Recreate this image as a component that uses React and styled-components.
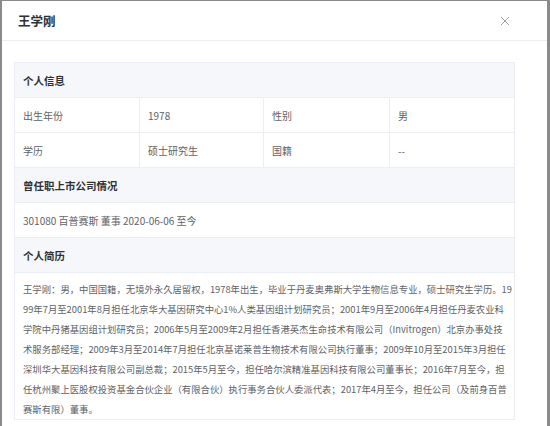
import React from "react";
import styled, { createGlobalStyle } from "styled-components";

const Global = createGlobalStyle`
  html, body { margin: 0; padding: 0; }
  body {
    background: #8a8a8a;
    overflow: hidden;
    font-family: "Noto Sans CJK SC", "Noto Sans", sans-serif;
  }
`;

const Modal = styled.div`
  margin: 1px 0 0 2px;
  width: 545px;
  height: 440px;
  background: #fff;
  box-sizing: border-box;
`;

const Header = styled.div`
  height: 39px;
  border-bottom: 1px solid #eeeeee;
  display: flex;
  align-items: center;
  justify-content: space-between;
  padding: 0 37px 0 16px;
`;

const Title = styled.div`
  font-size: 12.5px;
  font-weight: 700;
  color: #303133;
`;

const Close = styled.button`
  border: 0;
  background: none;
  padding: 0;
  width: 10px;
  height: 10px;
  display: flex;
  cursor: pointer;
`;

const Body = styled.div`
  padding: 21px 32px 0 12px;
`;

const Card = styled.div`
  border: 1px solid #ebeef5;
`;

const SectionTitle = styled.div`
  height: 35px;
  box-sizing: border-box;
  display: flex;
  align-items: center;
  padding-left: 8px;
  background: #f5f7fa;
  font-size: 10.5px;
  font-weight: 700;
  color: #303133;
  border-bottom: 1px solid #ebeef5;
`;

const Grid = styled.div`
  display: grid;
  grid-template-columns: 125px 124px 126px 1fr;
`;

const Cell = styled.div`
  height: 35px;
  box-sizing: border-box;
  display: flex;
  align-items: center;
  padding-left: 8px;
  font-size: 10px;
  color: #606266;
  border-bottom: 1px solid #ebeef5;
  border-right: ${(p) => (p.$last ? "0" : "1px solid #ebeef5")};
`;

const Line = styled.div`
  height: 35px;
  box-sizing: border-box;
  display: flex;
  align-items: center;
  padding-left: 8px;
  font-size: 10px;
  color: #606266;
  border-bottom: 1px solid #ebeef5;
`;

const Para = styled.p`
  margin: 0;
  padding: 6px 0 0 8px;
  font-size: 9.35px;
  line-height: 20px;
  color: #606266;
  white-space: nowrap;
`;

const rows = [
  ["出生年份", "1978", "性别", "男"],
  ["学历", "硕士研究生", "国籍", "--"],
];

const bioLines = [
  "王学刚：男，中国国籍，无境外永久居留权，1978年出生，毕业于丹麦奥弗斯大学生物信息专业，硕士研究生学历。19",
  "99年7月至2001年8月担任北京华大基因研究中心1%人类基因组计划研究员；2001年9月至2006年4月担任丹麦农业科",
  "学院中丹猪基因组计划研究员；2006年5月至2009年2月担任香港英杰生命技术有限公司（Invitrogen）北京办事处技",
  "术服务部经理；2009年3月至2014年7月担任北京基诺莱普生物技术有限公司执行董事；2009年10月至2015年3月担任",
  "深圳华大基因科技有限公司副总裁；2015年5月至今，担任哈尔滨精准基因科技有限公司董事长；2016年7月至今，担",
  "任杭州聚上医股权投资基金合伙企业（有限合伙）执行事务合伙人委派代表；2017年4月至今，担任公司（及前身百普",
  "赛斯有限）董事。",
];

export default function App() {
  return (
    <>
      <Global />
      <Modal>
        <Header>
          <Title>王学刚</Title>
          <Close aria-label="close">
            <svg width="10" height="10" viewBox="0 0 10 10">
              <path d="M1 1L9 9M9 1L1 9" stroke="#a0a0a0" strokeWidth="1" />
            </svg>
          </Close>
        </Header>
        <Body>
          <Card>
            <SectionTitle>个人信息</SectionTitle>
            <Grid>
              {rows.map((r, i) =>
                r.map((c, j) => (
                  <Cell key={`${i}-${j}`} $last={j === 3}>
                    {c}
                  </Cell>
                ))
              )}
            </Grid>
            <SectionTitle>曾任职上市公司情况</SectionTitle>
            <Line>301080 百普赛斯 董事 2020-06-06 至今</Line>
            <SectionTitle>个人简历</SectionTitle>
            <Para>
              {bioLines.map((l, i) => (
                <React.Fragment key={i}>
                  {l}
                  {i < bioLines.length - 1 && <br />}
                </React.Fragment>
              ))}
            </Para>
          </Card>
        </Body>
      </Modal>
    </>
  );
}
